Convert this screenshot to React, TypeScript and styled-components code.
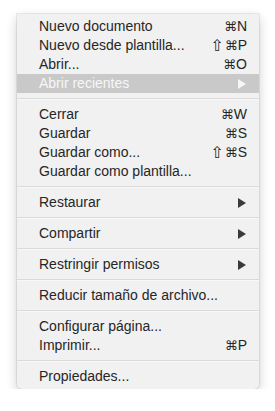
import styled, { createGlobalStyle } from 'styled-components';

const GlobalStyle = createGlobalStyle`
  html, body {
    margin: 0;
    padding: 0;
    background: #ffffff;
  }
  body {
    font-family: 'Liberation Sans', Arial, 'DejaVu Sans', sans-serif;
  }
`;

type Entry =
  | { kind: 'item'; label: string; shortcut?: string; submenu?: boolean; active?: boolean }
  | { kind: 'sep' };

const entries: Entry[] = [
  { kind: 'item', label: 'Nuevo documento', shortcut: '⌘N' },
  { kind: 'item', label: 'Nuevo desde plantilla...', shortcut: '⇧⌘P' },
  { kind: 'item', label: 'Abrir...', shortcut: '⌘O' },
  { kind: 'item', label: 'Abrir recientes', submenu: true, active: true },
  { kind: 'sep' },
  { kind: 'item', label: 'Cerrar', shortcut: '⌘W' },
  { kind: 'item', label: 'Guardar', shortcut: '⌘S' },
  { kind: 'item', label: 'Guardar como...', shortcut: '⇧⌘S' },
  { kind: 'item', label: 'Guardar como plantilla...' },
  { kind: 'sep' },
  { kind: 'item', label: 'Restaurar', submenu: true },
  { kind: 'sep' },
  { kind: 'item', label: 'Compartir', submenu: true },
  { kind: 'sep' },
  { kind: 'item', label: 'Restringir permisos', submenu: true },
  { kind: 'sep' },
  { kind: 'item', label: 'Reducir tamaño de archivo...' },
  { kind: 'sep' },
  { kind: 'item', label: 'Configurar página...' },
  { kind: 'item', label: 'Imprimir...', shortcut: '⌘P' },
  { kind: 'sep' },
  { kind: 'item', label: 'Propiedades...' },
];

const Page = styled.div`
  padding: 14px 0 0 17px;
`;

const Menu = styled.div`
  width: 242px;
  box-sizing: border-box;
  padding: 3px 0;
  background: #f1f1f1;
  border-radius: 0 0 5px 5px;
  box-shadow: 0 0 0 1px rgba(0, 0, 0, 0.07), 0 4px 12px rgba(0, 0, 0, 0.2);
`;

const Row = styled.div<{ $active?: boolean }>`
  height: 19px;
  display: flex;
  align-items: center;
  padding: 0 12px 0 22px;
  font-size: 14px;
  line-height: 19px;
  color: ${(p) => (p.$active ? '#f7f7f7' : '#262626')};
  background: ${(p) => (p.$active ? '#c9c9c9' : 'transparent')};
  white-space: nowrap;
`;

const Label = styled.span`
  flex: 1;
`;

const Shortcut = styled.span`
  display: flex;
  align-items: center;
  font-size: 14px;
`;

const Glyph = styled.span<{ $size: number; $gap: number }>`
  font-family: 'DejaVu Sans', sans-serif;
  font-size: ${(p) => p.$size}px;
  margin-right: ${(p) => p.$gap}px;
`;

const Arrow = styled.svg<{ $active?: boolean }>`
  width: 8px;
  height: 10px;
  margin-right: 1px;
  fill: ${(p) => (p.$active ? '#f7f7f7' : '#3a3a3a')};
`;

const Separator = styled.div`
  height: 12px;
  display: flex;
  align-items: center;
  &::after {
    content: '';
    flex: 1;
    height: 2px;
    background: linear-gradient(#dadada 50%, #f8f8f8 50%);
  }
`;

const renderShortcut = (s: string) =>
  Array.from(s).map((ch, i) =>
    ch === '⇧' ? (
      <Glyph key={i} $size={16} $gap={1}>
        {ch}
      </Glyph>
    ) : ch === '⌘' ? (
      <Glyph key={i} $size={13} $gap={0}>
        {ch}
      </Glyph>
    ) : (
      <span key={i}>{ch}</span>
    )
  );

export default function App() {
  return (
    <Page>
      <GlobalStyle />
      <Menu>
        {entries.map((e, i) =>
          e.kind === 'sep' ? (
            <Separator key={i} />
          ) : (
            <Row key={i} $active={e.active}>
              <Label>{e.label}</Label>
              {e.shortcut && <Shortcut>{renderShortcut(e.shortcut)}</Shortcut>}
              {e.submenu && (
                <Arrow $active={e.active} viewBox="0 0 8 10">
                  <path d="M0 0 L8 5 L0 10 Z" />
                </Arrow>
              )}
            </Row>
          )
        )}
      </Menu>
    </Page>
  );
}
